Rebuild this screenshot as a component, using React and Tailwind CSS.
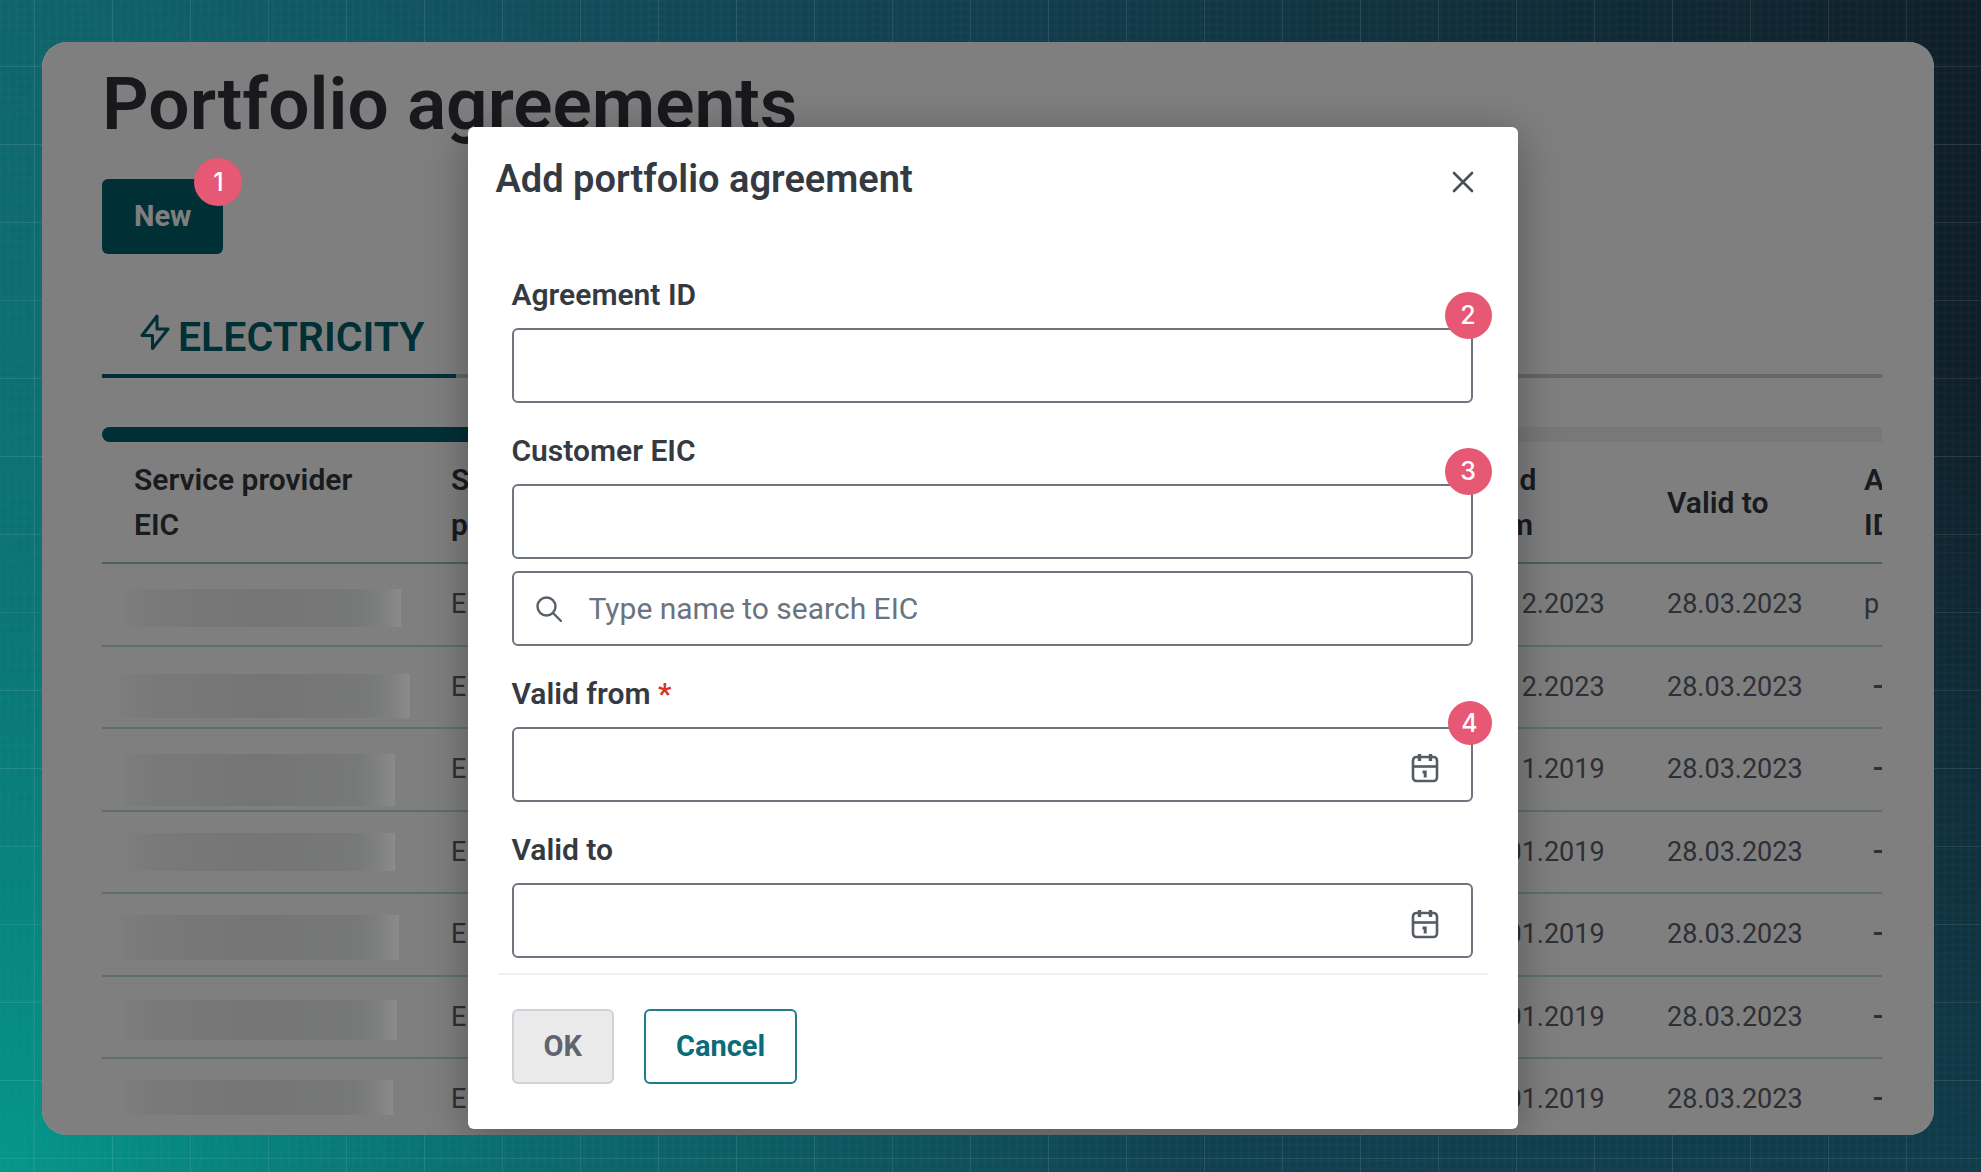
const rows = [
  { from: "28.12.2023", id: "p", mask: "ml-[23px] mt-[25px] h-[38px] w-[276px]" },
  { from: "28.12.2023", id: "–", mask: "ml-[18px] mt-[27px] h-[44px] w-[290px]" },
  { from: "01.11.2019", id: "–", mask: "ml-[22px] mt-[25px] h-[52px] w-[271px]" },
  { from: "01.01.2019", id: "–", mask: "ml-[26px] mt-[21px] h-[38px] w-[267px]" },
  { from: "01.01.2019", id: "–", mask: "ml-[19px] mt-[21px] h-[45px] w-[278px]" },
  { from: "01.01.2019", id: "–", mask: "ml-[23px] mt-[23px] h-[40px] w-[272px]" },
  { from: "01.01.2019", id: "–", mask: "ml-[23px] mt-[21px] h-[35px] w-[268px]" },
];

const inputClass =
  "block h-[75px] w-full rounded-md border-2 border-[#6f757e] bg-white text-[30px] text-[#353a42] placeholder:text-[#6b737e] outline-none focus:border-[#0b6b78]";

function Badge({ className, children }) {
  return (
    <span
      className={`absolute z-20 flex items-center justify-center rounded-full bg-[#e65873] font-[Inter,sans-serif] text-[25px] leading-none font-medium text-white ${className}`}
    >
      {children}
    </span>
  );
}

function BoltIcon() {
  return (
    <svg viewBox="0 0 30 38" className="h-[38px] w-[30px]" fill="none" stroke="currentColor" strokeWidth="3" strokeLinejoin="round" aria-hidden="true">
      <path d="M17 3 2 22.500h10.500V35.500L28 16H17z" />
    </svg>
  );
}

function CloseIcon() {
  return (
    <svg viewBox="0 0 22 22" className="h-[22px] w-[22px]" fill="none" stroke="currentColor" strokeWidth="2.600" strokeLinecap="round" aria-hidden="true">
      <path d="M2 2l18 18M20 2 2 20" />
    </svg>
  );
}

function SearchIcon() {
  return (
    <svg viewBox="0 0 26 26" className="h-[26px] w-[26px]" fill="none" stroke="currentColor" strokeWidth="2.400" strokeLinecap="round" aria-hidden="true">
      <circle cx="10.500" cy="10.500" r="9" />
      <path d="M17 17l8 8" />
    </svg>
  );
}

function CalendarIcon() {
  return (
    <svg viewBox="0 0 28 30" className="h-[30px] w-[28px]" fill="none" stroke="currentColor" strokeWidth="2.600" aria-hidden="true">
      <rect x="2" y="4" width="24" height="24" rx="3.500" />
      <path d="M2 13.500h24" />
      <path d="M8.500 1v7M19.500 1v7" strokeWidth="3.400" />
      <path d="M11.500 19h2.700v5.500" strokeWidth="3" />
    </svg>
  );
}

function Label({ htmlFor, children, required }) {
  return (
    <label htmlFor={htmlFor} className="block text-[30px] leading-10 font-semibold text-[#353a42]">
      {children}
      {required && <span className="text-[#dc3224]"> *</span>}
    </label>
  );
}

function DateInput({ id, required }) {
  return (
    <div className="relative">
      <input id={id} type="text" required={required} className={`${inputClass} pr-20 pl-5`} />
      <button type="button" aria-label="Open calendar" className="absolute inset-y-0 right-[34px] flex items-center pt-1.5 text-[#555c66]">
        <CalendarIcon />
      </button>
    </div>
  );
}

function PortfolioPage() {
  return (
    <main className="pt-[22px] pr-[52px] pl-[60px]">
      <h1 className="text-[73px] leading-[80px] font-semibold whitespace-nowrap text-[#2f333b]">Portfolio agreements</h1>

      <div className="relative mt-[35px] w-fit">
        <button type="button" className="h-[75px] rounded-md bg-[#00606c] px-8 text-[29px] font-bold text-white">
          New
        </button>
        <Badge className="-top-[21px] -right-[19px] size-12">1</Badge>
      </div>

      <nav className="mt-[59px] flex border-b-4 border-[#cacccf]">
        <a href="#electricity" className="-mb-1 flex items-start gap-2 border-b-4 border-[#00606c] pr-8 pb-[13px] pl-[38px] text-[41px] leading-[48px] font-semibold text-[#00606c]">
          <BoltIcon />
          ELECTRICITY
        </a>
      </nav>

      <div className="mt-[49px] h-[15px] overflow-hidden rounded-l-full bg-[#f0f0f0]">
        <div className="h-full w-1/2 bg-[#00606c]" />
      </div>

      <table className="w-full table-fixed border-collapse text-left">
        <colgroup>
          <col className="w-[317px]" />
          <col />
          <col className="w-[198px]" />
          <col className="w-[197px]" />
          <col className="w-[50px]" />
        </colgroup>
        <thead>
          <tr className="border-b-2 border-[#98c0c6] text-[30px] leading-[45px] text-[#32363e] *:overflow-hidden *:py-[15px] *:pl-8 *:font-semibold">
            <th scope="col">Service provider<br />EIC</th>
            <th scope="col">Service<br />provider</th>
            <th scope="col">Valid<br />from</th>
            <th scope="col">Valid to</th>
            <th scope="col">Agreement<br />ID</th>
          </tr>
        </thead>
        <tbody>
          {rows.map((row, i) => (
            <tr
              key={i}
              className={`align-top text-[27px] leading-10 text-[#5a606a] ${
                i < rows.length - 1 ? "border-b-2 border-[#bcdcdd] odd:h-[83px] even:h-[82px]" : "h-[74px]"
              }`}
            >
              <td className="p-0">
                <div
                  className={`relative z-20 bg-[linear-gradient(90deg,#7c7d7c_0%,#787978_12%,#747574_50%,#777978_85%,#7e807f_93%,#8a8b8a_100%)] ${row.mask}`}
                />
              </td>
              <td className="pt-5 pl-8">E</td>
              <td className="pt-5 pl-8">{row.from}</td>
              <td className="pt-5 pl-8">28.03.2023</td>
              <td className="overflow-hidden pt-5 pl-8">
                {row.id === "–" ? <span className="pl-2 font-bold">–</span> : row.id}
              </td>
            </tr>
          ))}
        </tbody>
      </table>
    </main>
  );
}

function AgreementDialog() {
  return (
    <form
      role="dialog"
      aria-labelledby="dialog-title"
      onSubmit={(e) => e.preventDefault()}
      className="w-[1050px] max-w-full rounded-md bg-white pb-[45px] shadow-[0_8px_45px_rgba(0,0,0,0.32)]"
    >
      <header className="flex items-center justify-between pt-7 pr-11 pl-7">
        <h2 id="dialog-title" className="text-[38px] leading-[48px] font-semibold text-[#353a42]">Add portfolio agreement</h2>
        <button type="button" aria-label="Close" className="pt-1.5 text-[#4a4f58]">
          <CloseIcon />
        </button>
      </header>

      <div className="mt-[72px] flex flex-col gap-7 pr-[45px] pl-11">
        <div className="flex flex-col gap-[13px]">
          <Label htmlFor="agreement-id">Agreement ID</Label>
          <div className="relative">
            <input id="agreement-id" type="text" className={`${inputClass} px-5`} />
            <Badge className="-top-9 -right-[19px] size-[47px]">2</Badge>
          </div>
        </div>

        <div className="flex flex-col gap-[13px]">
          <Label htmlFor="customer-eic">Customer EIC</Label>
          <div className="flex flex-col gap-3">
            <div className="relative">
              <input id="customer-eic" type="text" className={`${inputClass} px-5`} />
              <Badge className="-top-9 -right-[19px] size-[47px]">3</Badge>
            </div>
            <div className="relative">
              <span className="absolute inset-y-0 left-6 flex items-center text-[#5a6069]">
                <SearchIcon />
              </span>
              <input type="search" aria-label="Search EIC by name" placeholder="Type name to search EIC" className={`${inputClass} pr-5 pl-[75px]`} />
            </div>
          </div>
        </div>

        <div className="flex flex-col gap-[13px]">
          <Label htmlFor="valid-from" required>Valid from</Label>
          <div className="relative">
            <DateInput id="valid-from" required />
            <Badge className="-top-[26px] -right-[19px] size-11">4</Badge>
          </div>
        </div>

        <div className="flex flex-col gap-[13px]">
          <Label htmlFor="valid-to">Valid to</Label>
          <DateInput id="valid-to" />
        </div>
      </div>

      <hr className="mx-[30px] mt-[15px] border-t-2 border-[#e9f3f0]" />

      <footer className="mt-[34px] flex gap-[30px] px-11 text-[29px] font-bold">
        <button type="submit" disabled className="h-[75px] rounded-md border-2 border-[#cfd2d8] bg-[#eaeaea] px-[30px] text-[#5f6570]">
          OK
        </button>
        <button type="button" className="h-[75px] rounded-md border-2 border-[#1f7d88] bg-white px-[30px] text-[#0b6b78]">
          Cancel
        </button>
      </footer>
    </form>
  );
}

export default function App() {
  return (
    <div className="flex min-h-screen flex-col bg-[repeating-linear-gradient(90deg,transparent_0_34px,rgba(255,255,255,0.09)_34px_35px,transparent_35px_78px),repeating-linear-gradient(180deg,transparent_0_66px,rgba(255,255,255,0.09)_66px_67px,transparent_67px_78px),repeating-linear-gradient(90deg,rgba(255,255,255,0.02)_0_1px,transparent_1px_8px),repeating-linear-gradient(180deg,rgba(255,255,255,0.02)_0_1px,transparent_1px_8px),radial-gradient(ellipse_60%_110%_at_0%_100%,#04968a_0%,rgba(4,150,138,0.45)_45%,transparent_100%),linear-gradient(0deg,rgba(16,68,84,0.8)_0%,transparent_70%),linear-gradient(90deg,#10606a_0%,#134556_40%,#112f3b_75%,#101f29_100%)] pt-[42px] pr-[47px] pb-[37px] pl-[42px] font-[Roboto,sans-serif]">
      <div className="relative flex-1 overflow-hidden rounded-[25px] bg-white">
        <PortfolioPage />
        <div className="absolute inset-0 z-10 flex items-start justify-center bg-black/50 pt-[85px] pl-[9px]">
          <AgreementDialog />
        </div>
      </div>
    </div>
  );
}
